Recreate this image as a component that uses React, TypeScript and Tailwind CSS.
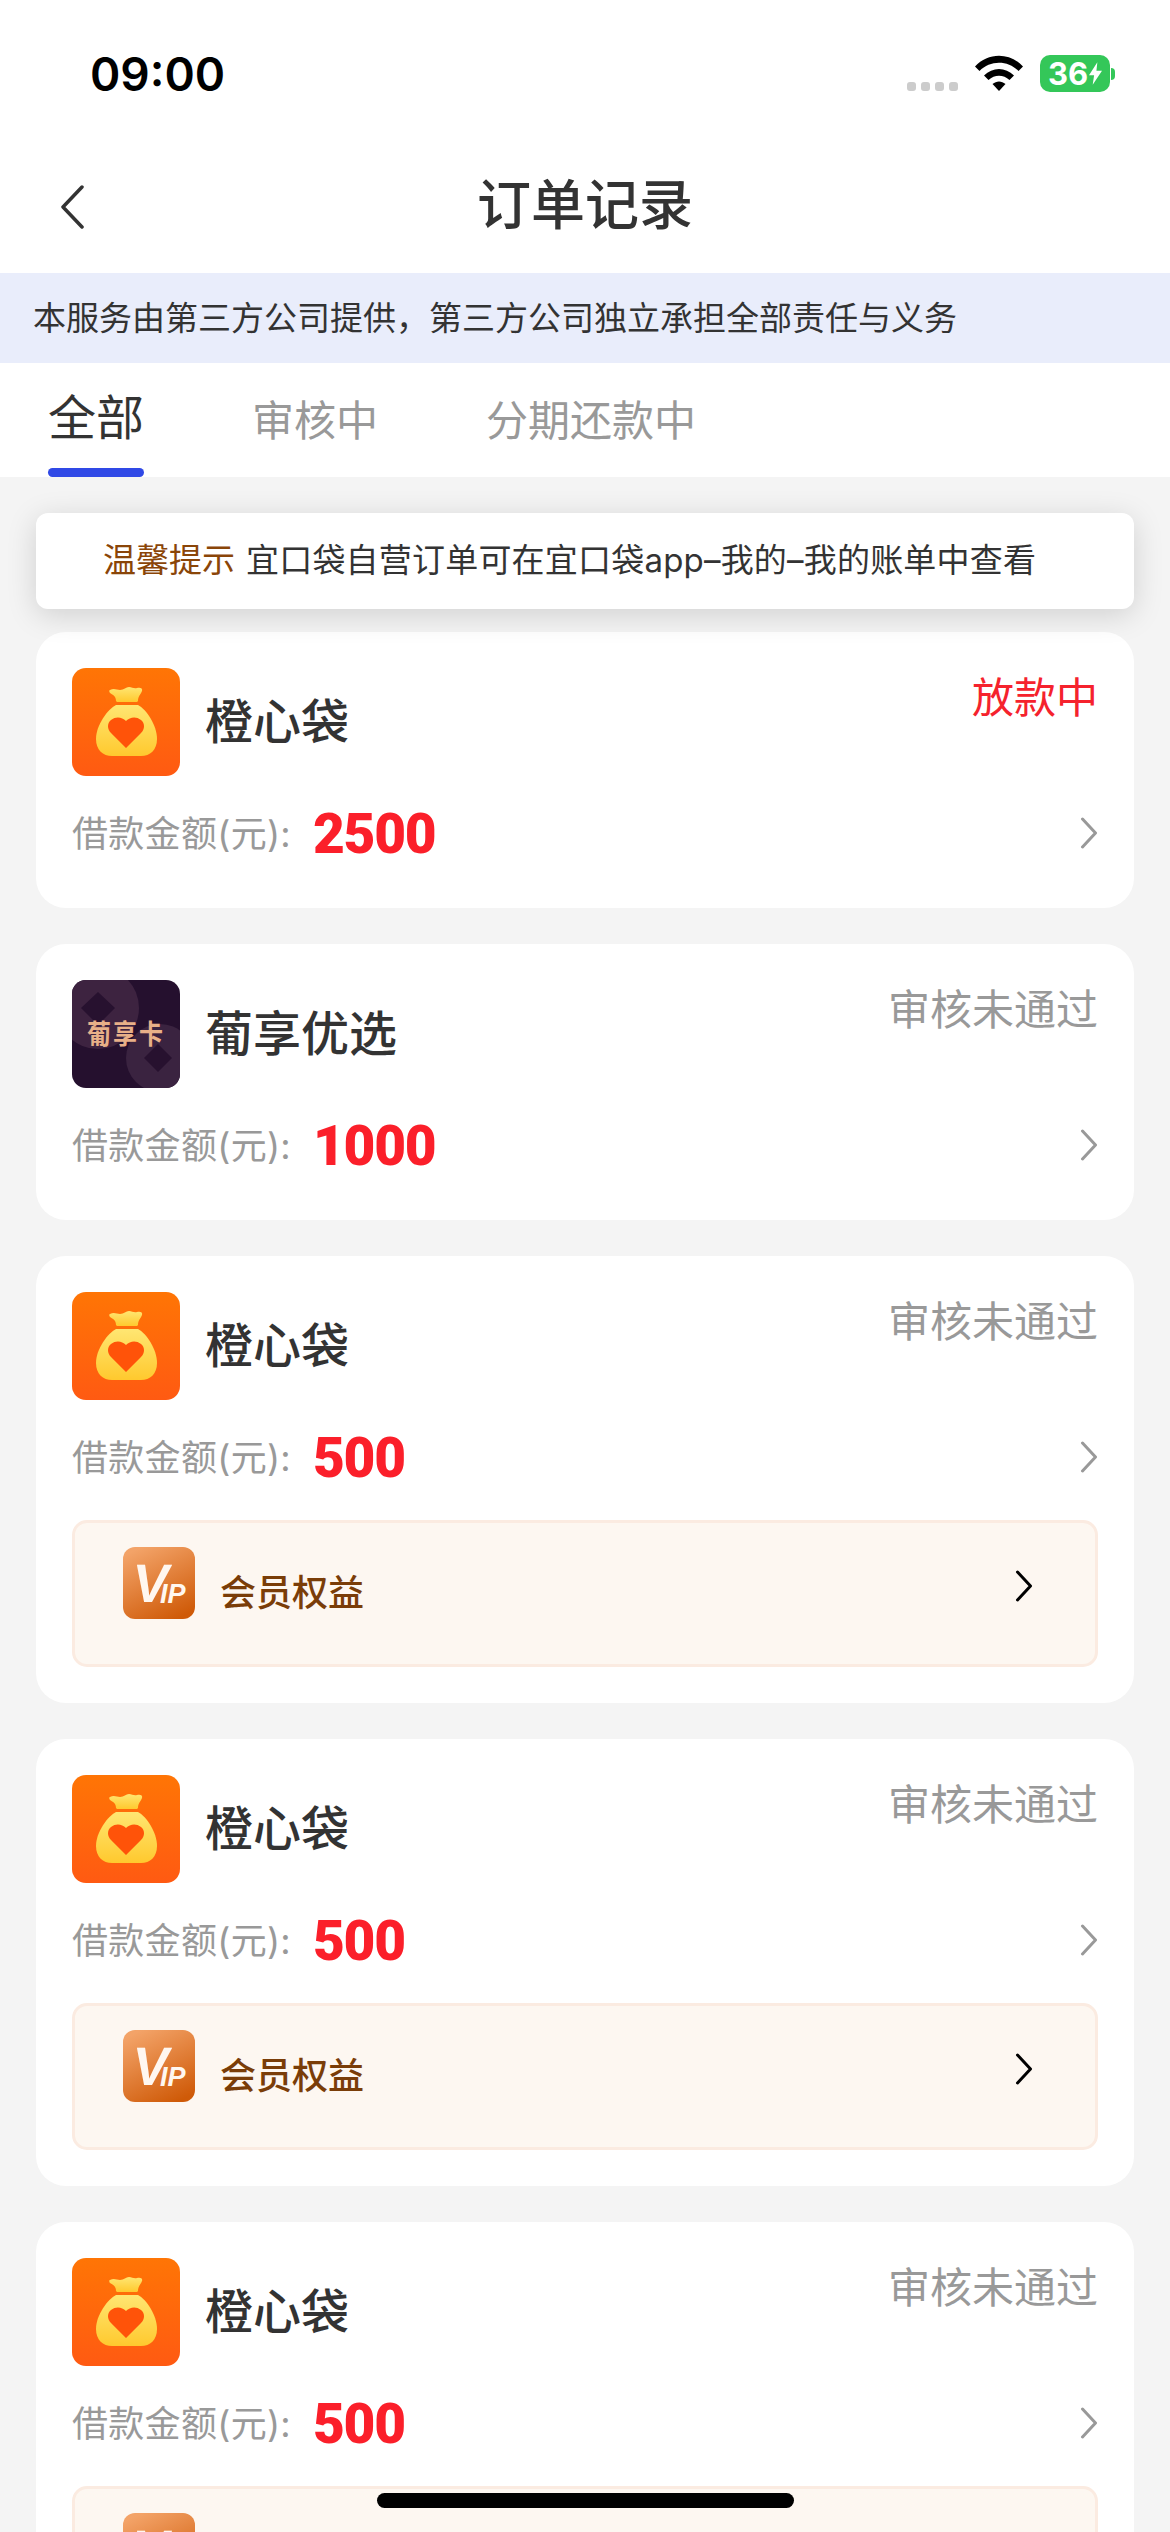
import React from "react";

const cjk = "font-['Inter','Noto_Sans_CJK_SC',sans-serif]";

function BagLogo() {
  return (
    <svg viewBox="0 0 108 108" className="w-[108px] h-[108px] shrink-0">
      <defs>
        <linearGradient id="bagBg" x1="0" y1="0" x2="0" y2="1">
          <stop offset="0" stopColor="#ff7505" />
          <stop offset="1" stopColor="#ff5a12" />
        </linearGradient>
        <linearGradient id="bagBody" x1="0" y1="0" x2="0" y2="1">
          <stop offset="0" stopColor="#ffe672" />
          <stop offset="1" stopColor="#ffc92e" />
        </linearGradient>
      </defs>
      <rect width="108" height="108" rx="14" fill="url(#bagBg)" />
      <path d="M38 22c4-2 7 0 10 0 4 0 6-3 9-3 3 0 5 2 8 1 3-1 6 0 5 3-1 3-4 5-4 10l-1 1H45l-1-1c0-5-3-6-6-8-1-1-1-3 0-3z" fill="url(#bagBody)" />
      <path d="M44 37h22c8 4 19 20 19 34 0 11-7 17-16 17H40c-9 0-16-6-16-17 0-14 12-30 20-34z" fill="url(#bagBody)" />
      <path d="M54 80 39 65c-4-4-4-10 0-13 5-4 11-3 15 1 4-4 10-5 15-1 4 3 4 9 0 13z" fill="#ff5309" />
    </svg>
  );
}

function GrapeLogo() {
  return (
    <div className="w-[108px] h-[108px] shrink-0">
      <svg viewBox="0 0 108 108" className="w-full h-full">
        <clipPath id="grapeClip">
          <rect width="108" height="108" rx="14" />
        </clipPath>
        <g clipPath="url(#grapeClip)">
          <rect width="108" height="108" fill="#25102e" />
          <circle cx="26" cy="28" r="41" fill="#3d2340" />
          <path d="M26 12 43 28 26 45 9 28z" fill="#27112f" />
          <circle cx="88" cy="78" r="34" fill="#3a2340" />
          <path d="M86 64 100 78 86 92 72 78z" fill="#27112f" />
          <text transform="translate(54 64) scale(1 1.14)" textAnchor="middle" fill="#e8b088" fontSize="24" fontWeight="700" letterSpacing="2" fontFamily="'Noto Sans CJK SC', sans-serif">葡享卡</text>
        </g>
      </svg>
    </div>
  );
}

function VipLogo() {
  return (
    <svg viewBox="0 0 72 72" className="w-[72px] h-[72px] shrink-0">
      <defs>
        <linearGradient id="vipBg" x1="0.25" y1="0" x2="0.75" y2="1">
          <stop offset="0" stopColor="#f3a368" />
          <stop offset="1" stopColor="#cf5a08" />
        </linearGradient>
      </defs>
      <rect width="72" height="72" rx="12" fill="url(#vipBg)" />
      <text transform="translate(7 55) skewX(-10)" fill="#fff7f0" fontSize="54" fontWeight="700" fontFamily="'Liberation Sans', sans-serif">V</text>
      <text x="37" y="56" fill="#fff7f0" fontSize="27" fontWeight="700" fontStyle="italic" fontFamily="'Liberation Sans', sans-serif">IP</text>
    </svg>
  );
}

function Chevron({ className }: { className: string }) {
  return (
    <svg viewBox="0 0 18 32" fill="none" className={className}>
      <path d="M2.5 2 15.5 16 2.5 30" stroke="currentColor" strokeWidth="3" strokeLinecap="round" strokeLinejoin="round" />
    </svg>
  );
}

function OrderCard({ logo, name, status, amount, vip, red }: { logo: React.ReactNode; name: string; status: string; amount: string; vip?: boolean; red?: boolean }) {
  return (
    <div className={vip ? "bg-white rounded-[30px] px-9 pt-9 pb-9 shrink-0" : "bg-white rounded-[30px] px-9 pt-9 pb-[54px] shrink-0"}>
      <div className="flex items-start justify-between h-[108px]">
        <div className="flex items-center gap-[25px]">
          {logo}
          <span className="text-[48px] leading-[60px] font-medium text-[#333333]">{name}</span>
        </div>
        <span className={red ? "text-[42px] leading-[50px] text-[#f5222d] mt-[5px]" : "text-[42px] leading-[50px] text-[#999999] mt-[5px]"}>{status}</span>
      </div>
      <div className="flex items-center justify-between h-[40px] mt-[38px]">
        <div className="flex items-center">
          <span className="text-[36px] leading-[40px] text-[#999999] w-[241px] whitespace-nowrap tracking-[0.3px]">借款金额(元):</span>
          <span className="font-['Roboto',sans-serif] font-black text-[55px] leading-[40px] tracking-[-1.3px] text-[#fb1f2a]">{amount}</span>
        </div>
        <Chevron className="w-[18px] h-[32px] text-[#999999] -mt-[2px]" />
      </div>
      {vip && (
        <div className="mt-[42px] h-[147px] rounded-[15px] border-[3px] border-[#fbebe1] bg-[#fdf7f1] flex justify-between pl-[48px] pr-[62px] pt-6">
          <div className="flex items-start gap-[25px]">
            <VipLogo />
            <span className="text-[36px] leading-[44px] font-medium text-[#7a3d08] mt-6">会员权益</span>
          </div>
          <Chevron className="w-[18px] h-[32px] text-black mt-[23px]" />
        </div>
      )}
    </div>
  );
}

export default function App() {
  return (
    <div className={`relative h-[2532px] w-[1170px] overflow-hidden bg-[#f4f4f4] ${cjk}`}>
      <div className="bg-white">
        <div className="h-[130px] flex items-start justify-between pl-[90px] pr-[55px] pt-[51px]">
          <span className="text-[46px] leading-[46px] font-semibold text-black font-['Inter',sans-serif]">09:00</span>
          <div className="flex items-start pt-[4px]">
            <div className="flex gap-[5px] mt-[27px] mr-[17px]">
              <i className="w-[9px] h-[9px] rounded-[3px] bg-[#cccccc]" />
              <i className="w-[9px] h-[9px] rounded-[3px] bg-[#cccccc]" />
              <i className="w-[9px] h-[9px] rounded-[3px] bg-[#cccccc]" />
              <i className="w-[9px] h-[9px] rounded-[3px] bg-[#cccccc]" />
            </div>
            <svg viewBox="0 0 48 36" className="w-[48px] h-[36px] mr-[17px]">
              <path d="M0 11.5C13-3 35-3 48 11.5l-4.5 4.6C33 5 15 5 4.500 16.100z" fill="#000" />
              <path d="M9 20.500C17.500 11.800 30.500 11.800 39 20.500l-4.500 4.600C28.500 19.300 19.500 19.300 13.500 25.100z" fill="#000" />
              <path d="M17.500 29C21.500 25.500 26.500 25.500 30.500 29L24 36z" fill="#000" />
            </svg>
            <div className="flex items-center">
              <div className="w-[70px] h-[37px] rounded-[10px] bg-[#34c759] flex items-center justify-center gap-[1px]">
                <span className="text-[31px] leading-[37px] font-bold text-white font-['Inter',sans-serif]">36</span>
                <svg viewBox="0 0 14 24" className="w-[13px] h-[23px]">
                  <path d="M9 0 0 14h5.500L4 24l10-15H8z" fill="#fff" />
                </svg>
              </div>
              <div className="w-[4px] h-[12px] rounded-r-full bg-[#34c759] ml-[1px]" />
            </div>
          </div>
        </div>
        <div className="h-[143px] flex items-start justify-center relative pt-[44px]">
          <svg viewBox="0 0 24 44" fill="none" className="absolute left-[60px] top-[55px] w-[24px] h-[44px]">
            <path d="M22 2 3 22 22 42" stroke="#333333" strokeWidth="3.500" strokeLinecap="round" strokeLinejoin="round" />
          </svg>
          <h1 className="text-[54px] leading-[64px] font-medium text-[#333333]">订单记录</h1>
        </div>
      </div>

      <div className="h-[90px] bg-[#e9edfb] flex items-center pl-[33px] pt-[1px] text-[33px] text-[#333333]">
        本服务由第三方公司提供，第三方公司独立承担全部责任与义务
      </div>

      <div className="h-[114px] bg-white flex items-start pl-[48px]">
        <div className="flex flex-col items-center w-[96px]">
          <span className="text-[48px] leading-[58px] text-[#333333] mt-[26px]">全部</span>
          <i className="w-[96px] h-[9px] rounded-[5px] bg-[#3049e6] mt-[21px]" />
        </div>
        <span className="text-[42px] leading-[58px] text-[#999999] ml-[108px] mt-[29px]">审核中</span>
        <span className="text-[42px] leading-[58px] text-[#999999] ml-[108px] mt-[29px]">分期还款中</span>
      </div>

      <div className="flex flex-col px-9 pt-9">
        <div className="h-[96px] bg-white rounded-[12px] shadow-[0_6px_30px_rgba(0,0,0,0.15)] flex items-center pl-[67px] text-[33px] relative z-10 shrink-0">
          <span className="text-[#8a4508]">温馨提示</span>
          <span className="text-[#333333] ml-[11px] tracking-[0.2px] whitespace-nowrap">宜口袋自营订单可在宜口袋app–我的–我的账单中查看</span>
        </div>
        <div className="flex flex-col gap-9 mt-[23px]">
          <OrderCard logo={<BagLogo />} name="橙心袋" status="放款中" amount="2500" red />
          <OrderCard logo={<GrapeLogo />} name="葡享优选" status="审核未通过" amount="1000" />
          <OrderCard logo={<BagLogo />} name="橙心袋" status="审核未通过" amount="500" vip />
          <OrderCard logo={<BagLogo />} name="橙心袋" status="审核未通过" amount="500" vip />
          <OrderCard logo={<BagLogo />} name="橙心袋" status="审核未通过" amount="500" vip />
        </div>
      </div>

      <div className="absolute left-[377px] top-[2493px] w-[417px] h-[15px] rounded-full bg-black" />
    </div>
  );
}
